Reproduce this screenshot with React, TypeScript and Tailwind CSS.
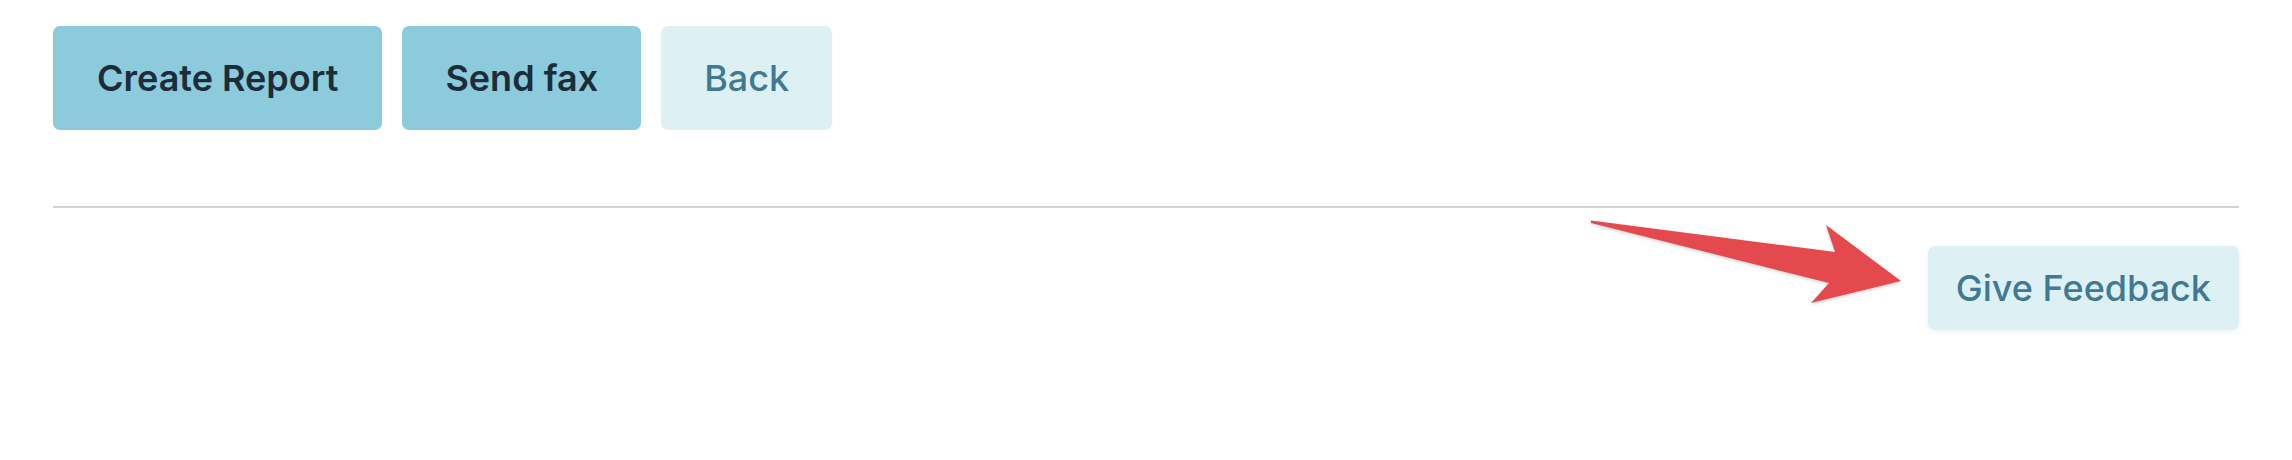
const font = { fontFamily: "Inter, 'Liberation Sans', sans-serif" };

const Arrow = () => (
  <svg
    className="absolute left-[1585px] top-[215px]"
    width="325"
    height="95"
    viewBox="0 0 325 95"
  >
    <defs>
      <filter id="sh" x="-10%" y="-10%" width="120%" height="130%">
        <feDropShadow dx="0" dy="1.5" stdDeviation="1.5" floodColor="#000" floodOpacity="0.18" />
      </filter>
    </defs>
    <polygon
      points="6,5.5 250,37 241,10 316,66 226,88 244,68 6,8"
      fill="#e4494d"
      filter="url(#sh)"
    />
  </svg>
);

export default function App() {
  return (
    <div className="relative w-[2292px] h-[460px] bg-white px-[53px] pt-[26px]" style={font}>
      {/* action buttons */}
      <div className="flex gap-[20px]">
        <button className="h-[104px] px-[44px] rounded-[7px] bg-[#8bcbdb] text-[#1c2d39] text-[36px] font-semibold">
          Create Report
        </button>
        <button className="h-[104px] px-[43px] rounded-[7px] bg-[#8bcbdb] text-[#1c2d39] text-[36px] font-semibold">
          Send fax
        </button>
        <button className="h-[104px] px-[43px] rounded-[7px] bg-[#ddf1f5] text-[#3f7994] text-[36px] font-medium">
          Back
        </button>
      </div>

      <div className="mt-[76px] h-[2px] bg-[#d2d2d2]" />

      <div className="flex justify-end mt-[38px]">
        <button className="h-[84px] px-[28px] rounded-[7px] bg-[#ddf1f5] text-[#3f7994] text-[36px] font-medium shadow-[0_2px_6px_rgba(0,0,0,0.06)]">
          Give Feedback
        </button>
      </div>

      <Arrow />
    </div>
  );
}
